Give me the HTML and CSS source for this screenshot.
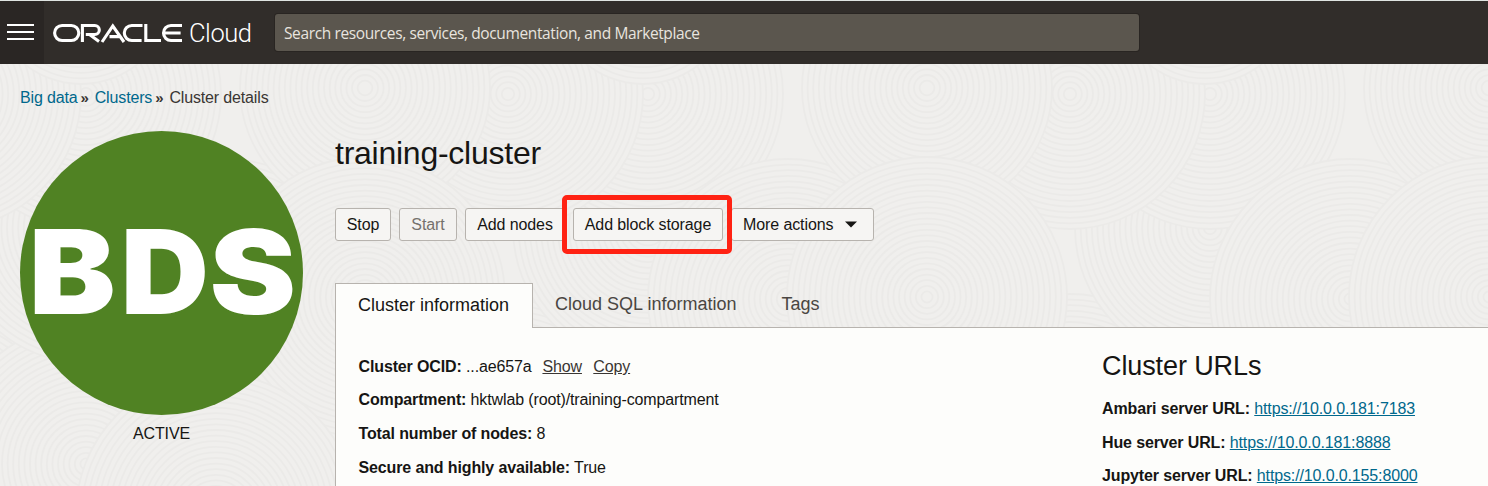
FILE: index.html
```
<!DOCTYPE html>
<html lang="en">
<head>
<meta charset="utf-8">
<title>Cluster details</title>
<link rel="stylesheet" href="styles.css">
</head>
<body>
<header class="topbar">
  <button class="menu" aria-label="Menu"><span></span><span></span><span></span></button>
  <div class="brand">
    <svg class="oracle" viewBox="0 0 130 20" role="img" aria-label="Oracle">
      <g fill="none" stroke="#fff" stroke-width="3.1" stroke-linejoin="miter">
        <rect x="1.6" y="2.5" width="24.2" height="15" rx="7.5"/>
        <path d="M29.4 19V2.5H41.8a4.5 4.5 0 0 1 0 9H32.8M36.5 11.5L46 18.4"/>
        <path d="M49 19L59.8 3L71 19M56.5 13.6H67"/>
        <path d="M89.5 2.5H78.8a7.5 7.5 0 0 0 0 15H88.6"/>
        <path d="M92.8 1V17.5H108"/>
        <path d="M129 2.5H118a7.5 7.5 0 0 0 0 15H129M111 10H127.6"/>
      </g>
    </svg>
    <span class="cloud">Cloud</span>
  </div>
  <div class="search">Search resources, services, documentation, and Marketplace</div>
</header>
<main class="page">
  <svg class="texture" aria-hidden="true"></svg>
  <nav class="crumbs"><a>Big data</a><i>»</i><a>Clusters</a><i>»</i><span>Cluster details</span></nav>
  <div class="layout">
    <aside class="status">
      <div class="badge"><span class="mark">B<span class="narrow">D</span>S</span></div>
      <p class="state">ACTIVE</p>
    </aside>
    <section class="details">
      <h1>training-cluster</h1>
      <div class="actions">
        <button class="btn stop">Stop</button>
        <button class="btn start" disabled>Start</button>
        <button class="btn nodes">Add nodes</button>
        <div class="focus"><button class="btn storage">Add block storage</button><div class="highlight"></div></div>
        <button class="btn more">More actions<svg width="12" height="7" viewBox="0 0 12 7"><path d="M0 .5H12L6 6.5Z" fill="#161513"/></svg></button>
      </div>
      <div class="tabs">
        <div class="tab active">Cluster information</div>
        <div class="tab">Cloud SQL information</div>
        <div class="tab">Tags</div>
      </div>
      <div class="panel">
        <div class="info">
          <p><b>Cluster OCID:</b> <span class="dots">...</span>ae657a <u class="show">Show</u> <u class="copy">Copy</u></p>
          <p><b>Compartment:</b> hktwlab (root)/training-compartment</p>
          <p><b>Total number of nodes:</b> 8</p>
          <p><b>Secure and highly available:</b> True</p>
        </div>
        <div class="urls">
          <h2>Cluster URLs</h2>
          <p><b>Ambari server URL:</b> <a>https://10.0.0.181:7183</a></p>
          <p><b>Hue server URL:</b> <a>https://10.0.0.181:8888</a></p>
          <p><b>Jupyter server URL:</b> <a>https://10.0.0.155:8000</a></p>
        </div>
      </div>
    </section>
  </div>
</main>
<script src="texture.js"></script>
</body>
</html>
```
FILE: styles.css
```
* { box-sizing: border-box; }
body { margin: 0; height: 486px; overflow: hidden; font: 16px/20px "Liberation Sans", Arial, sans-serif; color: #161513; background: #f0efed; }
h1, h2, p { margin: 0; font-weight: 400; }
button { font: inherit; }
.topbar { height: 64px; display: flex; align-items: flex-start; background: #312d2a; border-top: 1px solid #dfe4e2; }
.menu { width: 44px; height: 63px; padding: 23px 10px 0 7px; border: 0; background: #2a2624; display: flex; flex-direction: column; gap: 5px; }
.menu span { height: 2px; width: 27px; background: #fff; }
.brand { display: flex; width: 231px; padding: 22px 0 0 9px; }
.oracle { width: 130px; height: 20px; }
.cloud { font-family: Roboto, sans-serif; font-weight: 300; font-size: 25.5px; line-height: 20px; letter-spacing: -.45px; color: #fff; margin-left: 6px; }
.search { width: 864px; height: 37px; margin-top: 13px; padding-left: 9px; border-radius: 3px; background: #5b564e; box-shadow: 0 0 0 1px #292522; color: #e8e4df; font: 15.5px/39px "Open Sans", sans-serif; letter-spacing: -.38px; }
.page { position: relative; height: 422px; overflow: hidden; }
.texture { position: absolute; inset: 0; width: 1488px; height: 422px; z-index: -1; }
.crumbs { display: flex; padding: 24px 0 0 20px; height: 67px; letter-spacing: -.15px; color: #3a3633; }
.crumbs a { color: #00688c; }
.crumbs i { font-style: normal; font-weight: 700; font-size: 15px; line-height: 19px; margin: 0 6px 0 3px; }
.layout { display: flex; padding-left: 20px; }
.status { width: 315px; flex: none; }
.badge { width: 283px; height: 284px; border-radius: 50%; background: #508223; display: flex; align-items: center; justify-content: center; }
.mark { font: 900 117px/1 Inter, "Liberation Sans", sans-serif; color: #fff; transform: scaleX(1.11); margin: -3px 0 0 1px; }
.narrow { display: inline-block; transform: scaleX(.94); transform-origin: 94% 50%; }
.state { width: 283px; text-align: center; margin-top: 9px; letter-spacing: -.1px; }
.details { width: 1153px; flex: none; }
h1 { font-size: 32px; line-height: 44px; letter-spacing: -.25px; }
.actions { display: flex; gap: 8px; margin-top: 33px; height: 33px; }
.btn { height: 33px; padding: 0; border: 1px solid #b7b3ae; border-radius: 3px; background: #f6f5f3; color: #161513; white-space: nowrap; letter-spacing: -.1px; }
.stop { width: 56px; }
.start { width: 58px; color: #75716d; background: #f3f2f0; }
.nodes { width: 100px; }
.focus { position: relative; }
.storage { width: 150px; }
.highlight { position: absolute; left: -11px; top: -13px; width: 170px; height: 59px; border: 5px solid #ff2213; border-radius: 5px; }
.more { width: 143px; display: flex; align-items: center; padding-left: 11px; gap: 12px; }
.tabs { display: flex; margin-top: 42px; height: 45px; font-size: 18px; color: #4a4642; border-bottom: 1px solid #b7b3ae; white-space: nowrap; }
.tab { padding: 11px 23px 0 22px; }
.tab.active { width: 198px; height: 45px; background: #fdfdfb; border: 1px solid #b7b3ae; border-bottom: 0; color: #161513; }
.panel { display: flex; height: 160px; background: #fdfdfb; border-left: 1px solid #b7b3ae; letter-spacing: -.13px; }
.info { width: 766px; padding: 29px 0 0 22.5px; }
.info p, .urls p { margin-bottom: 13.6px; white-space: nowrap; }
.info p:first-child { margin-bottom: 13px; }
.info p:nth-child(2) { margin-bottom: 14px; }
.show { margin: 0 3px 0 6.5px; color: #3a3633; }
.copy { margin-left: 4px; color: #3a3633; }
.urls { padding-top: 22px; }
.urls h2 { font-size: 27px; line-height: 32px; margin-bottom: 17px; letter-spacing: -.1px; }
.urls a { color: #00688c; text-decoration: underline; }
```
FILE: texture.js
```
// Overlapping discs of fine rings, repeated every 562px, form the page background.
const period = 562;
const discs = [[1070, 370, 140], [1210, 400, 140], [1210, 164, 135], [1210, 30, 135], [1070, 30, 135], [1350, 235, 140], [927, 24, 125], [927, 233, 140], [1205, -70, 90], [1340, 450, 140]];
const svg = document.querySelector(".texture");
for (const [x, y, r] of discs) {
  for (let shift = -2; shift <= 1; shift++) {
    for (let k = r; k > 2; k -= 5.6) {
      const c = document.createElementNS("http://www.w3.org/2000/svg", "circle");
      c.setAttribute("cx", x + shift * period);
      c.setAttribute("cy", y);
      c.setAttribute("r", k);
      c.setAttribute("fill", "#f0efed");
      c.setAttribute("stroke", "#ebeae8");
      c.setAttribute("stroke-width", "1.8");
      svg.append(c);
    }
  }
}
```
